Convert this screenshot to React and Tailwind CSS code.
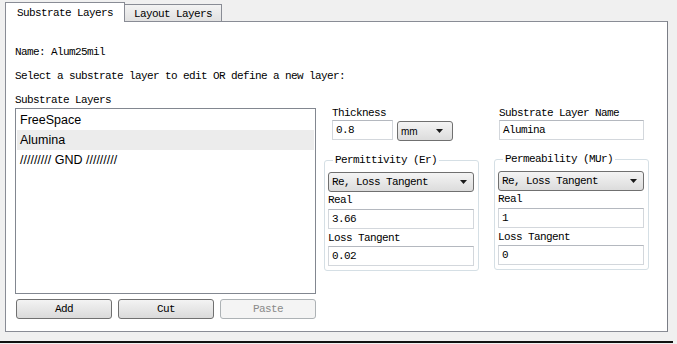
import React from 'react';

const mono = "[font-family:'Liberation_Mono',monospace] text-[11px] tracking-[-0.6px]";
const sans = "[font-family:'Liberation_Sans',Arial,sans-serif] text-[12.5px]";

function TextBox({ value, className = '' }) {
  return (
    <div className={`h-[20px] border border-[#d3d7dc] border-t-[#b4b8bf] bg-white pl-[3px] leading-[18px] ${className}`}>
      {value}
    </div>
  );
}

function DropArrow() {
  return (
    <svg width="7" height="4" viewBox="0 0 7 4" className="shrink-0">
      <polygon points="0,0 7,0 3.5,4" fill="#1a1a1a" />
    </svg>
  );
}

function Combo({ value, className = '', small = false }) {
  return (
    <div className={`h-[20px] flex items-center justify-between border border-[#707070] rounded-[3px] bg-gradient-to-b from-[#f4f4f4] to-[#dcdcdc] pl-[3px] pr-[6px] ${className}`}>
      <span className={small ? "[font-family:'Liberation_Sans',Arial,sans-serif] text-[10px] tracking-normal" : ''}>{value}</span>
      <DropArrow />
    </div>
  );
}

function Group({ title, real, loss }) {
  return (
    <fieldset className="mt-[12px] border border-[#d5dfe5] rounded-[3px] pl-[3px] pr-[4px] pb-[4px]">
      <legend className="ml-[5px] px-[2px] leading-[14px]">{title}</legend>
      <Combo value="Re, Loss Tangent" className="mt-[5px]" />
      <div className="leading-[16px]">Real</div>
      <TextBox value={real} className="mt-[1px]" />
      <div className="leading-[16px] mt-[1px]">Loss Tangent</div>
      <TextBox value={loss} />
    </fieldset>
  );
}

function Btn({ label, disabled }) {
  return (
    <button
      type="button"
      className={
        disabled
          ? 'w-[96px] h-[20px] rounded-[3px] border border-[#adb2b5] bg-[#f4f4f4] text-[#8a8a8a] leading-[18px]'
          : 'w-[96px] h-[20px] rounded-[3px] border border-[#707070] bg-gradient-to-b from-[#f3f3f3] to-[#dadada] leading-[18px]'
      }
    >
      {label}
    </button>
  );
}

export default function App() {
  const layers = ['FreeSpace', 'Alumina', '///////// GND /////////'];

  return (
    <div className={`w-[677px] h-[344px] bg-[#f0f0f0] overflow-hidden text-black ${mono}`}>
      <div className="pl-[5px] pt-[2px]">
        {/* Tabs */}
        <div className="flex items-end h-[20px] relative z-10">
          <div className="w-[120px] h-[20px] bg-white border border-b-0 border-[#898c95] pl-[11px] pt-[3px] leading-[14px]">
            Substrate Layers
          </div>
          <div className="w-[97px] h-[17px] mb-[1px] border border-l-0 border-b-0 border-[#898c95] bg-gradient-to-b from-[#f3f3f3] to-[#e1e1e1] pl-[9px] pt-[2px] leading-[14px]">
            Layout Layers
          </div>
        </div>

        {/* Panel */}
        <div className="w-[663px] h-[311px] -mt-px border border-[#898c95] border-r-[#7a7d85] bg-white pl-[9px]">
          <div className="mt-[23px] leading-[14px]">Name: Alum25mil</div>
          <div className="mt-[10px] leading-[14px]">Select a substrate layer to edit OR define a new layer:</div>

          <div className="mt-[10px] flex">
            {/* Layer list */}
            <div className="w-[301px]">
              <div className="leading-[14px]">Substrate Layers</div>
              <div className={`mt-[1px] h-[186px] border border-[#828790] bg-white pt-px px-px ${sans} tracking-normal`}>
                {layers.map((l, i) => (
                  <div
                    key={l}
                    className={`h-[20px] leading-[20px] pl-[3px] ${i === 1 ? 'bg-[#ececec]' : ''}`}
                  >
                    {l}
                  </div>
                ))}
              </div>
              <div className="mt-[5px] pl-px flex gap-[6px]">
                <Btn label="Add" />
                <Btn label="Cut" />
                <Btn label="Paste" disabled />
              </div>
            </div>

            {/* Properties */}
            <div className="ml-[8px] flex gap-[15px]">
              <div className="w-[155px] pt-[13px]">
                <div className="pl-[8px] leading-[14px]">Thickness</div>
                <div className="pl-[8px] flex gap-[4px]">
                  <TextBox value="0.8" className="w-[61px]" />
                  <Combo value="mm" small className="w-[56px] mt-px pr-[9px]" />
                </div>
                <Group title="Permittivity (Er)" real="3.66" loss="0.02" />
              </div>

              <div className="w-[155px] pt-[13px]">
                <div className="pl-[5px] leading-[14px]">Substrate Layer Name</div>
                <TextBox value="Alumina" className="ml-[5px] w-[145px]" />
                <Group title="Permeability (MUr)" real="1" loss="0" />
              </div>
            </div>
          </div>
        </div>
      </div>
      <div className="mt-[9px] w-[673px] h-[2px] bg-[#111]" />
    </div>
  );
}
